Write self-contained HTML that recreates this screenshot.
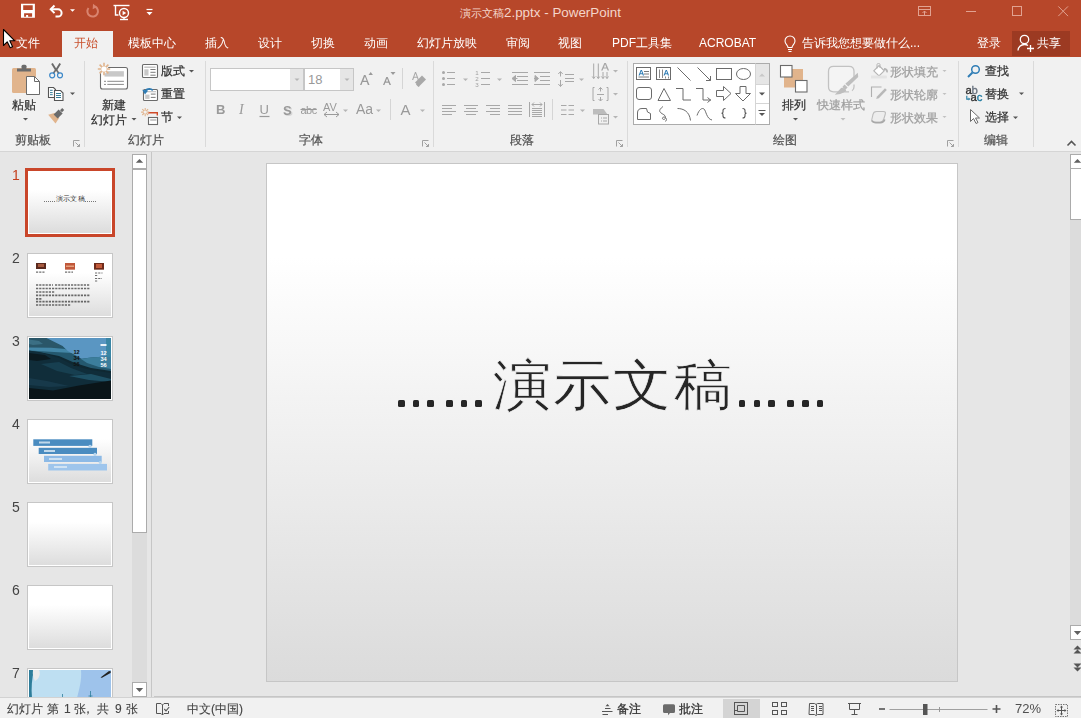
<!DOCTYPE html>
<html><head><meta charset="utf-8">
<style>
*{margin:0;padding:0;box-sizing:border-box}
html,body{width:1081px;height:718px;overflow:hidden;background:#E6E6E6;font-family:"Liberation Sans",sans-serif;position:relative}
.a{position:absolute;white-space:nowrap}
#title{left:0;top:0;width:1081px;height:57px;background:#B7472A}
#ribbon{left:0;top:57px;width:1081px;height:95px;background:#F1F1F1;border-bottom:1px solid #D5D5D5}
#status{left:0;top:697px;width:1081px;height:21px;background:#F1F1F1;border-top:1px solid #D2D2D2}
.tab{color:#fff;font-size:12px;top:36px;line-height:14px}
.gl{color:#555;font-size:12px;line-height:14px;top:133px}
.rb{color:#333;font-size:12px;line-height:14px}
.dis{color:#A0A0A0}
.num{font-size:14px;line-height:18px;color:#444}
.th{background:linear-gradient(#fff 30%,#DCDCDC);border:1px solid #C6C6C6;box-shadow:inset 0 0 0 1px #fff;left:27px;width:86px;height:65px}
.st{font-size:12px;line-height:14px;color:#444;top:702px}
svg.a{overflow:visible}
.rb,.gl{-webkit-text-stroke:0.25px currentColor}
.st{-webkit-text-stroke:0.12px currentColor}
.rb,.gl,.st,.tab,.num{will-change:transform}
</style></head><body>
<div id="title" class="a"></div>
<!-- quick access -->
<svg class="a" style="left:0;top:0" width="160" height="28" viewBox="0 0 160 28">
 <path d="M21 3.8h13.9v14h-13.9z M23.2 5.2h9.5v4.9h-9.5z M24.1 13.2h8v3.5h-4v-1.7h-2v1.7h-2z" fill="#fff" fill-rule="evenodd"/>
 <path d="M54.5 5.5l-3.8 3.8 3.8 3.8" fill="none" stroke="#fff" stroke-width="2"/>
 <path d="M51.5 9.3h6.5a3.6 3.6 0 0 1 0 7.2h-2.5" fill="none" stroke="#fff" stroke-width="2"/>
 <path d="M70 9.2h5l-2.5 2.6z" fill="#fff"/>
 <path d="M95 6.5a5.3 5.3 0 1 1 -6.5 1.5" fill="none" stroke="#D9846F" stroke-width="2"/>
 <path d="M93 3.8l4 3.2 -4.3 2.2z" fill="#D9846F"/>
 <g fill="none" stroke="#fff" stroke-width="1.4">
  <path d="M113.5 5.5h16"/>
  <path d="M115.5 6v9h3"/>
  <circle cx="124" cy="13" r="4.5"/>
  <path d="M120 19.5h8"/>
  <path d="M124 17.5v2"/>
 </g>
 <path d="M122.6 10.8v4.4l3.6-2.2z" fill="#fff"/>
 <path d="M146.5 9.5h6" stroke="#fff" stroke-width="1.2"/>
 <path d="M146.5 12h6l-3 3.2z" fill="#fff"/>
</svg>
<div class="a" style="left:460px;top:5px;font-size:11px;line-height:16px;color:#F4D6CB">演示文稿<span style="font-size:13.4px">2.pptx - PowerPoint</span></div>
<!-- window controls -->
<svg class="a" style="left:0;top:0" width="1081" height="28">
 <g fill="none" stroke="#E1A291" stroke-width="1">
  <rect x="918.5" y="6.5" width="12" height="9"/>
  <path d="M918.5 9.5h12"/><path d="M924.5 15.5v-4.5M922.5 13l2-2 2 2"/>
  <path d="M966 11.5h10"/>
  <rect x="1012.5" y="6.5" width="9" height="9"/>
  <path d="M1058.3 6.4l9.7 9.7M1068 6.4l-9.7 9.7"/>
 </g>
</svg>
<!-- tabs -->
<div class="a" style="left:62px;top:31px;width:51px;height:26px;background:#F1F1F1"></div>
<div class="a tab" style="left:16px">文件</div>
<div class="a tab" style="left:74px;color:#C9502C">开始</div>
<div class="a tab" style="left:128px">模板中心</div>
<div class="a tab" style="left:205px">插入</div>
<div class="a tab" style="left:258px">设计</div>
<div class="a tab" style="left:311px">切换</div>
<div class="a tab" style="left:364px">动画</div>
<div class="a tab" style="left:417px">幻灯片放映</div>
<div class="a tab" style="left:506px">审阅</div>
<div class="a tab" style="left:558px">视图</div>
<div class="a tab" style="left:612px">PDF工具集</div>
<div class="a tab" style="left:699px">ACROBAT</div>
<svg class="a" style="left:783px;top:35px" width="16" height="18">
 <path d="M5 12.5c0-2-3-3.5-3-6.5a5 5 0 0 1 10 0c0 3-3 4.5-3 6.5z" fill="none" stroke="#fff" stroke-width="1.1"/>
 <path d="M5 14.5h4M5.5 16.5h3" stroke="#fff" stroke-width="1.1"/>
</svg>
<div class="a tab" style="left:802px">告诉我您想要做什么...</div>
<div class="a tab" style="left:977px">登录</div>
<div class="a" style="left:1012px;top:31px;width:58px;height:25px;background:#9C3A22"></div>
<svg class="a" style="left:1016px;top:33px" width="20" height="20">
 <circle cx="8.5" cy="6.5" r="4.2" fill="none" stroke="#fff" stroke-width="1.3"/>
 <path d="M2 17.5c0-3.5 2.8-6 6.5-6 1.5 0 2.6.4 3.5 1" fill="none" stroke="#fff" stroke-width="1.3"/>
 <path d="M14.5 12v7M11 15.5h7" stroke="#fff" stroke-width="1.3"/>
</svg>
<div class="a tab" style="left:1037px">共享</div>
<!-- cursor -->
<svg class="a" style="left:0;top:0" width="20" height="50">
 <path d="M3.5 29.5V45.5L7.2 41.8L10.2 47.8L12.6 46.8L9.8 40.8H14.8Z" fill="#fff" stroke="#000" stroke-width="1.1" stroke-linejoin="round"/>
</svg>

<!-- RIBBON -->
<div id="ribbon" class="a"></div>
<!--RIBBON_CONTENT--><!-- separators -->
<div class="a" style="left:84px;top:61px;width:1px;height:86px;background:#DADADA"></div>
<div class="a" style="left:205px;top:61px;width:1px;height:86px;background:#DADADA"></div>
<div class="a" style="left:433px;top:61px;width:1px;height:86px;background:#DADADA"></div>
<div class="a" style="left:627px;top:61px;width:1px;height:86px;background:#DADADA"></div>
<div class="a" style="left:958px;top:61px;width:1px;height:86px;background:#DADADA"></div>
<div class="a" style="left:1033px;top:61px;width:1px;height:86px;background:#DADADA"></div>
<!-- group labels -->
<div class="a gl" style="left:15px">剪贴板</div>
<div class="a gl" style="left:128px">幻灯片</div>
<div class="a gl" style="left:299px">字体</div>
<div class="a gl" style="left:510px">段落</div>
<div class="a gl" style="left:773px">绘图</div>
<div class="a gl" style="left:984px">编辑</div>
<!-- clipboard -->
<div class="a rb" style="left:12px;top:98px">粘贴</div>
<div class="a rb" style="left:102px;top:98px">新建</div>
<div class="a rb" style="left:91px;top:113px">幻灯片</div>
<div class="a rb" style="left:161px;top:64px">版式</div>
<div class="a rb" style="left:161px;top:87px">重置</div>
<div class="a rb" style="left:161px;top:110px">节</div>
<!-- font -->
<div class="a" style="left:210px;top:68px;width:94px;height:23px;background:#fff;border:1px solid #C6C6C6"></div>
<div class="a" style="left:290px;top:69px;width:13px;height:21px;background:#E6E6E6"></div>
<div class="a" style="left:304px;top:68px;width:50px;height:23px;background:#fff;border:1px solid #C6C6C6"></div>
<div class="a" style="left:340px;top:69px;width:13px;height:21px;background:#E6E6E6"></div>
<div class="a" style="left:308px;top:72px;font-size:13px;line-height:16px;color:#999">18</div>
<!-- drawing text -->
<div class="a rb" style="left:782px;top:98px">排列</div>
<div class="a rb dis" style="left:817px;top:98px">快速样式</div>
<div class="a rb dis" style="left:890px;top:65px">形状填充</div>
<div class="a rb dis" style="left:890px;top:88px">形状轮廓</div>
<div class="a rb dis" style="left:890px;top:111px">形状效果</div>
<!-- editing -->
<div class="a rb" style="left:985px;top:64px">查找</div>
<div class="a rb" style="left:985px;top:87px">替换</div>
<div class="a rb" style="left:985px;top:110px">选择</div>
<!-- gallery -->
<div class="a" style="left:633px;top:63px;width:137px;height:62px;background:#fff;border:1px solid #ABABAB"></div>
<div class="a" style="left:755px;top:63px;width:15px;height:62px;border:1px solid #ABABAB;border-left:1px solid #D5D5D5"></div>
<div class="a" style="left:756px;top:64px;width:13px;height:20px;background:#E6E6E6"></div>
<div class="a" style="left:756px;top:84px;width:13px;height:1px;background:#D5D5D5"></div>
<div class="a" style="left:756px;top:103px;width:13px;height:1px;background:#D5D5D5"></div>

<svg class="a" style="left:0;top:0" width="1081" height="160">
 <!-- paste -->
 <rect x="12" y="68" width="24" height="25" rx="1.5" fill="#E1B48C"/>
 <path d="M17 68.5h14v3h-14z" fill="#6B6B6B"/>
 <rect x="21.5" y="64.8" width="5" height="4.5" rx="1.5" fill="#6B6B6B"/>
 <path d="M26.5 76.5h8l5 5v13h-13z" fill="#fff" stroke="#6B6B6B" stroke-width="1"/>
 <path d="M34.5 76.5v5h5" fill="none" stroke="#6B6B6B" stroke-width="1"/>
 <path d="M23 118h5l-2.5 2.5z" fill="#555"/>
 <!-- cut -->
 <path d="M52 63.5L56.3 70.5M60.2 63.5L55.9 70.5" stroke="#6B6B6B" stroke-width="1.9"/>
 <path d="M56.1 69.5L53.2 73.5M56.1 69.5L59 73.5" stroke="#6B6B6B" stroke-width="1.6"/>
 <circle cx="52.2" cy="75.3" r="2.5" fill="none" stroke="#3C88C8" stroke-width="1.2"/>
 <circle cx="60" cy="75.3" r="2.5" fill="none" stroke="#3C88C8" stroke-width="1.2"/>
 <!-- copy -->
 <path d="M48.5 87.5h5l2 2v8h-7z" fill="#fff" stroke="#555" stroke-width="1.1"/>
 <path d="M50 90.3h2.7M50 92.6h2.7M50 94.7h2.7" stroke="#1F6E8C" stroke-width="0.9"/>
 <path d="M54.5 90.5h6l2.5 2.5v7.5h-8.5z" fill="#fff" stroke="#555" stroke-width="1.1"/>
 <path d="M56 93.5h5M56 95.5h5M56 97.5h5" stroke="#1F6E8C" stroke-width="0.9"/>
 <path d="M70 92.5h5l-2.5 2.5z" fill="#555"/>
 <!-- format painter -->
 <path d="M48.2 114.8L54.5 113L59.3 117.8L55.5 123.4Z" fill="#E1B48C"/>
 <path d="M53.6 114.6L58.6 109.6L62.6 113.6L57.6 118.6Z" fill="#6B6B6B"/>
 <path d="M60 110.2L62.2 108L64.2 110L62 112.2Z" fill="#6B6B6B"/>
 <!-- new slide -->
 <rect x="100.5" y="67.5" width="27" height="21.5" rx="2" fill="#fff" stroke="#6B6B6B" stroke-width="1.1"/>
 <rect x="104.5" y="71.2" width="19.4" height="5.4" fill="#C8C8C8"/>
 <path d="M104 81.3h2M107.3 81.3h16.6M104 84.4h2M107.3 84.4h16.6" stroke="#8A8A8A" stroke-width="1"/>
 <circle cx="104" cy="69" r="4.5" fill="#F1F1F1"/>
 <g stroke="#E1B48C" stroke-width="1.6">
  <path d="M104 62.8v12.4M97.8 69h12.4M99.6 64.6l8.8 8.8M108.4 64.6l-8.8 8.8"/>
 </g>
 <circle cx="104" cy="69" r="2.6" fill="#fff"/>
 <path d="M131.5 118h5l-2.5 2.5z" fill="#555"/>
 <!-- layout -->
 <rect x="142.5" y="64.5" width="15" height="13" rx="1" fill="#fff" stroke="#6B6B6B" stroke-width="1.1"/>
 <path d="M144.3 67.2h11.3" stroke="#BDBDBD" stroke-width="1.3"/>
 <rect x="144.3" y="69.3" width="4.2" height="6.3" fill="#C8C8C8"/>
 <path d="M150.4 69.5h5.2M150.4 72.3h5.2M150.4 75.2h5.2" stroke="#6B6B6B" stroke-width="0.9"/>
 <path d="M189 70h5l-2.5 2.5z" fill="#555"/>
 <!-- reset -->
 <rect x="143.5" y="89.5" width="14" height="11" rx="1" fill="#fff" stroke="#6B6B6B" stroke-width="1.1"/>
 <path d="M147 91.7h9" stroke="#BDBDBD" stroke-width="1.1"/>
 <rect x="145.2" y="94.6" width="4.3" height="4.3" fill="#C8C8C8"/>
 <path d="M150.8 94.1h4.8M150.8 97.4h4.8" stroke="#6B6B6B" stroke-width="0.9"/>
 <path d="M144.8 92.5a4.6 4 0 0 1 8 -2.2" fill="none" stroke="#2F7DB5" stroke-width="1.8"/>
 <path d="M142.2 89.8l2.8 4.6 3-3.6z" fill="#2F7DB5"/>
 <!-- section -->
 <path d="M148 112.8h9.3v2.6" fill="none" stroke="#D04A28" stroke-width="1.4"/>
 <rect x="148.5" y="117.5" width="9" height="7" fill="#fff" stroke="#6B6B6B" stroke-width="1.1"/>
 <path d="M150.2 120h6.2" stroke="#BDBDBD" stroke-width="1.6"/>
 <g stroke="#E1B48C" stroke-width="1.1"><path d="M145.2 108v8.2M141.1 112.1h8.2M142.3 109.2l5.8 5.8M148.1 109.2l-5.8 5.8"/></g>
 <circle cx="145.2" cy="112.1" r="1.6" fill="#F1F1F1"/>
 <path d="M177 116.5h5l-2.5 2.5z" fill="#555"/>
 <!-- font dropdown arrows -->
 <path d="M294.5 78.5h5l-2.5 2.5z" fill="#B5B5B5"/>
 <path d="M344.5 78.5h5l-2.5 2.5z" fill="#B5B5B5"/>
 <!-- grow/shrink -->
 <g fill="#9A9A9A">
 <path d="M360 85l4-10h1.5l4 10h-1.6l-1.1-2.9h-4.2l-1.1 2.9zM363.3 80.8h3.3l-1.65-4.4z"/>
 <path d="M368.5 75l2.2-3 2.2 3z"/>
 <path d="M383 85l3.3-8h1.4l3.3 8h-1.5l-.9-2.3h-3.3l-.9 2.3zM385.9 81.5h2.3l-1.15-3.1z"/>
 <path d="M390.5 72h5l-2.5 3z"/>
 </g>
 <path d="M402.5 68v21" stroke="#D5D5D5"/>
 <!-- clear formatting -->
 <g fill="#A8A8A8">
 <path d="M412 80l3-8h1l3 8h-1.2l-.8-2.2h-3l-.8 2.2zM414.3 76.8h2.4l-1.2-3.2z"/>
 <path d="M415 82.5l7-7 4 4-7 7z"/>
 </g>
 <path d="M416.5 84l2.5 2.5" stroke="#A8A8A8" stroke-width="1.6"/>
 <!-- row2 font -->
 <g fill="#9A9A9A" font-family="Liberation Sans" font-size="13">
  <text x="216" y="114" font-weight="bold">B</text>
  <text x="239" y="114" font-style="italic" font-family="Liberation Serif" font-size="14">I</text>
  <text x="259.5" y="114">U</text>
  <text x="284.2" y="116" font-weight="bold" fill="#D6D6D6">S</text>
  <text x="283" y="114.5" font-weight="bold">S</text>
  <text x="300.5" y="114" font-size="11" letter-spacing="-0.5">abc</text>
  <text x="323" y="111" font-size="11">AV</text>
  <text x="356" y="114" font-size="14">Aa</text>
  <text x="400.5" y="114.5" font-size="15">A</text>
 </g>
 <path d="M259.5 116.5h10" stroke="#9A9A9A" stroke-width="1.2"/>
 <path d="M300.5 109.5h16" stroke="#9A9A9A" stroke-width="1"/>
 <path d="M324 114.5h15M327 112l-3 2.5 3 2.5M336 112l3 2.5-3 2.5" fill="none" stroke="#9A9A9A" stroke-width="1"/>
 <g fill="#B5B5B5">
 <path d="M343 109.5h5l-2.5 2.5z"/><path d="M376 109.5h5l-2.5 2.5z"/><path d="M420 109.5h5l-2.5 2.5z"/>
 <path d="M463 78.5h5l-2.5 2.5z"/><path d="M497 78.5h5l-2.5 2.5z"/>
 <path d="M579 78.5h5l-2.5 2.5z"/><path d="M613 70h5l-2.5 2.5z"/><path d="M613 93h5l-2.5 2.5z"/><path d="M613 116h5l-2.5 2.5z"/>
 <path d="M580 109.5h5l-2.5 2.5z"/>
 </g>
 <path d="M390.5 99v21" stroke="#D5D5D5"/>
 <!-- paragraph row1 -->
 <g fill="#A8A8A8">
  <circle cx="443.5" cy="72.5" r="1.5"/><circle cx="443.5" cy="78.5" r="1.5"/><circle cx="443.5" cy="84.5" r="1.5"/>
 </g>
 <g stroke="#A8A8A8" stroke-width="1" fill="none">
  <path d="M447 72.5h8M447 78.5h8M447 84.5h8"/>
  <path d="M481 72.5h9M481 78.5h9M481 84.5h9"/>
  <path d="M512 72.5h16M517 76.5h11M517 80.5h11M512 84.5h16"/>
  <path d="M534 72.5h16M540 76.5h10M540 80.5h10M534 84.5h16"/>
  <path d="M565 74.5h9M565 78.5h9M565 81.5h9"/>
  <path d="M560.5 72v4.5M558.3 74l2.2-2.5 2.2 2.5M560.5 80v6.5M558.3 84l2.2 2.5 2.2-2.5"/>
 </g>
 <g fill="#A0A0A0" font-family="Liberation Sans" font-size="6.2"><text x="475.3" y="74.8">1</text><text x="475.3" y="80.8">2</text><text x="475.3" y="86.8">3</text></g>
 <path d="M512 78.5l3.5-3v6z M514.5 78.5h3" fill="#A8A8A8" stroke="#A8A8A8" stroke-width="1"/>
 <path d="M538.5 78.5l-3.5-3v6z M534 78.5h3" fill="#A8A8A8" stroke="#A8A8A8" stroke-width="1"/>
 <!-- paragraph row2 -->
 <g stroke="#A8A8A8" stroke-width="1" fill="none">
  <path d="M442 105.5h14M442 108.5h10M442 111.5h14M442 114.5h10"/>
  <path d="M464 105.5h14M466 108.5h10M464 111.5h14M466 114.5h10"/>
  <path d="M486 105.5h14M490 108.5h10M486 111.5h14M490 114.5h10"/>
  <path d="M508 105.5h14M508 108.5h14M508 111.5h14M508 114.5h14"/>
  <path d="M529.5 102v15M544.5 102v15M532 108.5h10M532 110.5h10M532 112.5h10M532 114.5h10M532 116.5h10M532 104.5h10M534 102.5l-2 2 2 2M540 102.5l2 2-2 2"/>
  <path d="M561 105.5h5.5M561 110h5.5M561 114.5h5.5M568.5 105.5h5.5M568.5 110h5.5M568.5 114.5h5.5"/>
 </g>
 <path d="M552.5 99v21" stroke="#D5D5D5"/>
 <!-- text direction -->
 <path d="M593 109h10.5l4 5.5h-14.5z" fill="#BDBDBD"/>
 <g stroke="#A8A8A8" stroke-width="1" fill="none">
  <path d="M593.7 63.5v15M598.3 63.5v15M603 72v6.5M607 72v6.5M592.2 76.5l1.5 2 1.5-2M596.8 76.5l1.5 2 1.5-2M601.5 76.5l1.5 2 1.5-2M605.5 76.5l1.5 2 1.5-2"/>
  <path d="M594.5 87.5h-1.5v13h1.5M606.5 87.5h1.5v13h-1.5M597 94.5h7M600.5 87.5v4M598.5 89.5l2-2 2 2M600.5 97v4M598.5 99l2 2 2-2"/>
  <rect x="598.5" y="114.5" width="10" height="9.5" fill="#F1F1F1"/>
  <path d="M601 118h1M603 118h4M601 121h1M603 121h4"/>
 </g>
 <path d="M604.3 63l-3.2 7.5h1.5l.7-1.9h3.6l.7 1.9h1.5l-3.2-7.5zM603.9 67.4l1.2-3.2 1.2 3.2z" fill="#A8A8A8"/>
 <!-- launchers -->
 <g fill="none" stroke="#A0A0A0" stroke-width="1">
  <path d="M73.5 146.5v-6h6M75.5 142.5l4 4M79.5 144v2.5h-2.5"/>
  <path d="M422.5 146.5v-6h6M424.5 142.5l4 4M428.5 144v2.5h-2.5"/>
  <path d="M616.5 146.5v-6h6M618.5 142.5l4 4M622.5 144v2.5h-2.5"/>
  <path d="M947.5 146.5v-6h6M949.5 142.5l4 4M953.5 144v2.5h-2.5"/>
 </g>
 <!-- gallery shapes -->
 <g fill="none" stroke="#6B6B6B" stroke-width="1">
  <rect x="636.5" y="67.5" width="14" height="12"/>
  <path d="M644 71.5h5M644 74h5M638.5 77h10.5" stroke-width="0.9"/>
  <rect x="656.5" y="67.5" width="14" height="12"/>
  <path d="M659.5 69.5v8.5M662.5 69.5v8.5M665.5 76.5v2M668.5 76.5v2" stroke-width="0.8"/>
  <path d="M677.5 67.5l13 13"/>
  <path d="M697.5 67.5l13 13M706 80.5h4.5v-4.5"/>
  <rect x="716.5" y="68.5" width="15" height="11"/>
  <ellipse cx="743.5" cy="74" rx="7" ry="5.5"/>
  <rect x="636.5" y="87.5" width="15" height="12" rx="2.5"/>
  <path d="M658 100.5l6-12 6.5 12z"/>
  <path d="M676 88.5h7v11.5h8"/>
  <path d="M696 88.5h7v11.5h8M707.5 97.5l3 2.5-3 2.5"/>
  <path d="M716.5 90.5h7v-4l7.5 7-7.5 7v-4h-7z"/>
  <path d="M740 86.5h6v7h4.5l-7.5 7.5-7.5-7.5h4.5z"/>
  <path d="M637.5 113Q637.5 108.5 642 108.5H646.5Q646.5 113 650.5 113.5V119.5H637.5Z"/>
  <path d="M663 106.5C660.5 108.5 658.5 110.5 660.5 112.5S665.5 114.5 665.5 117.5C665.5 120 662 120 662.5 118S666.5 117.5 666.5 119.5 665 121 665 121"/>
  <path d="M677.5 108.5c6 0 12 3 13 12"/>
  <path d="M697 115.5c2-6 5-8 7-6.5s2.5 10 8 11"/>
 </g>
 <path d="M725.5 108.5Q723 108.5 723 110.5V112Q723 113.3 721.5 113.3Q723 113.3 723 114.6V116Q723 118 725.5 118M742.5 108.5Q745 108.5 745 110.5V112Q745 113.3 746.5 113.3Q745 113.3 745 114.6V116Q745 118 742.5 118" fill="none" stroke="#555" stroke-width="1.1"/>
 <path d="M638.5 75.5l2.2-5.5h1.2l2.2 5.5h-1.2l-.5-1.3h-2.2l-.5 1.3zM640.5 73.3h1.6l-.8-2.2z" fill="#2F7DB5"/><path d="M663.5 75.5l2.2-5.5h1.2l2.2 5.5h-1.2l-.5-1.3h-2.2l-.5 1.3zM665.5 73.3h1.6l-.8-2.2z" fill="#2F7DB5"/>
 <path d="M759 76.5h6l-3-3z" fill="#C8C8C8"/>
 <path d="M759 92.5h6l-3 3z" fill="#555"/>
 <path d="M758.5 110.5h7" stroke="#555" stroke-width="1"/>
 <path d="M759 113h6l-3 3z" fill="#555"/>
 <!-- arrange -->
 <rect x="784" y="69" width="19" height="18.5" fill="#E1B48C"/>
 <rect x="780.5" y="65.5" width="11.5" height="11.5" fill="#fff" stroke="#6B6B6B" stroke-width="1.1"/>
 <rect x="795.5" y="80.5" width="11.5" height="11.5" fill="#fff" stroke="#6B6B6B" stroke-width="1.1"/>
 <path d="M793 118h5l-2.5 2.5z" fill="#555"/>
 <!-- quick styles -->
 <path d="M849 91.8H833.5Q828.5 91.8 828.5 86.8V71.3Q828.5 66.3 833.5 66.3H849Q854 66.3 854 71.3V77.5M854 84.5V86.8Q854 89.5 852 90.8" fill="#F4F4F4" stroke="#C2C2C2" stroke-width="1.3"/>
 <path d="M857.8 72.8L858.2 77L848.3 86.6L845.3 83.8Z" fill="#BEBEBE"/>
 <path d="M844.6 84.6L847.6 87.4L845.3 89.8L842.3 87Z" fill="#BEBEBE"/>
 <path d="M841.3 87.8Q845.8 88 846.3 91.3Q841 94.6 834.8 94.8Z" fill="#BEBEBE"/>
 <path d="M840.5 118h5l-2.5 2.5z" fill="#C0C0C0"/>
 <!-- shape fill/outline/effect -->
 <path d="M873.8 70.8L879 65.6L884.2 70.8L879 76Z" fill="#fff" stroke="#B5B5B5" stroke-width="1.2"/>
 <path d="M877 68.5V64.5Q877 63.5 878.5 63.5Q880 63.5 880 64.5V68" fill="none" stroke="#B5B5B5" stroke-width="1"/>
 <path d="M884 69Q887.5 69 887 72.3" fill="none" stroke="#B5B5B5" stroke-width="1.8"/>
 <path d="M871 77h15.8" stroke="#E4E4E4" stroke-width="2.8"/>
 <path d="M871.5 97v-10h10" fill="none" stroke="#B0B0B0" stroke-width="1.1"/>
 <path d="M877 96.5l8-8.2 1.8 1.8-8 8.2-2.6.8z" fill="#B8B8B8"/>
 <path d="M873 114.5Q873.5 111.5 876.5 111.5H883.5Q886 111.5 885.3 114L883.8 119Q883 122 880 122H874Q871.3 122 871.8 119.5Z" fill="#EDEDED" stroke="#BDBDBD" stroke-width="1.1"/>
 <path d="M872 120.5Q873 122.8 876 122.8H880.5Q883.5 122.8 884.8 119.5" fill="none" stroke="#A8A8A8" stroke-width="1.6"/>
 <g fill="#C0C0C0"><path d="M942.5 70h4l-2 2z"/><path d="M942.5 93h4l-2 2z"/><path d="M942.5 116h4l-2 2z"/></g>
 <!-- find -->
 <circle cx="975.5" cy="69.5" r="3.8" fill="none" stroke="#2F7DB5" stroke-width="1.5"/>
 <path d="M972.5 72.5l-4.5 4.5" stroke="#2F7DB5" stroke-width="2"/>
 <!-- replace -->
 <g font-family="Liberation Sans" font-size="11.3" stroke-width="0.35">
  <text x="965.6" y="93.9" fill="#333" stroke="#333">a</text><text x="971.5" y="93.9" fill="#6B7480" stroke="#6B7480">b</text>
  <text x="970.6" y="101" fill="#333" stroke="#333">a</text><text x="976.8" y="101" fill="#1F7AA0" stroke="#1F7AA0">c</text>
 </g>
 <path d="M966.8 95.8v3.3h2" fill="none" stroke="#1F7AA0" stroke-width="1.1"/>
 <path d="M968.5 97.6l1.8 1.5-1.8 1.5z" fill="#1F7AA0"/>
 <path d="M1019 92.5h5l-2.5 2.5z" fill="#555"/>
 <!-- select -->
 <path d="M970.5 109.5v12l3-3 2.5 5 2-1-2.5-4.5h4z" fill="#fff" stroke="#6B6B6B" stroke-width="1"/>
 <path d="M1013 116.5h5l-2.5 2.5z" fill="#555"/>
 <!-- collapse -->
 <path d="M1067.5 145.5l4-4 4 4" fill="none" stroke="#555" stroke-width="1.6"/>
</svg>
<!--/RIBBON-->

<!-- thumbnails pane -->
<div class="a" style="left:151px;top:152px;width:1px;height:545px;background:#C6C6C6"></div>
<div class="a num" style="left:12px;top:166px;color:#C43E1C">1</div>
<div class="a" style="left:25px;top:168px;width:90px;height:69px;border:3px solid #C9462A;background:#fff"></div>
<div class="a" style="left:29px;top:172px;width:82px;height:61px;background:linear-gradient(#fff 30%,#DCDCDC)"></div>
<div class="a" style="left:56px;top:193.5px;font-size:7px;line-height:10px;color:#3A3A3A;letter-spacing:0.2px">演示文稿</div>
<div class="a" style="left:44px;top:201px;width:11px;height:1px;border-top:1px dotted #777"></div>
<div class="a" style="left:85px;top:201px;width:11px;height:1px;border-top:1px dotted #777"></div>
<div class="a num" style="left:12px;top:249px">2</div>
<div class="a th" style="top:253px"></div>
<svg class="a" style="left:0;top:0" width="1" height="1">
 <rect x="36" y="263" width="10" height="6" fill="#5A2A1E"/><rect x="38" y="264" width="6" height="3" fill="#A65A3F"/>
 <rect x="65" y="263" width="10" height="6.5" fill="#C0583A"/><rect x="66" y="265.5" width="8" height="1.5" fill="#E6A07D"/>
 <rect x="94" y="263" width="10" height="6.5" fill="#6E2A1A"/><rect x="96" y="264" width="6" height="4" fill="#C25A3A"/>
 <g stroke="#2A2A2A" stroke-width="1.7" opacity=".68" stroke-dasharray="2.2 1">
  <path d="M36 272.2h8.5M65 272.2h8M95 273h7.5" stroke-width="1.2"/>
  <path d="M95 275.5h3M95 278.5h7M95 281h2.5" stroke-width="1"/>
  <path d="M36 285h17M55 285h35"/>
  <path d="M36 288.5h54"/>
  <path d="M36 292h19"/>
  <path d="M36 295.3h54"/>
  <path d="M36 298.8h6"/>
  <path d="M36 301.7h54"/>
  <path d="M36 305h35"/>
 </g>
</svg>
<div class="a num" style="left:12px;top:332px">3</div>
<div class="a th" style="top:336px"></div>
<svg class="a" style="left:29px;top:338px" width="82" height="61" viewBox="0 0 82 61">
 <rect width="82" height="61" fill="#0F2832"/>
 <path d="M0 0H82V33L62 30L46 25L30 18L10 14L0 13Z" fill="#24586E"/>
 <path d="M0 0H17.5L28 5L35 9L22 10.5L0 10Z" fill="#2A5668"/>
 <path d="M0 1.5L10 3L14 6L4 7L0 6Z" fill="#3B6F84"/>
 <path d="M0 9.5L22 9.8L36 11L44 15L25 14L0 12.5Z" fill="#4386A6"/>
 <path d="M17.5 0H77V18.5L62 19.5L52.6 20.8L38.4 12.8L33.6 8Z" fill="#5A96C2"/>
 <path d="M77 0H82V27H77Z" fill="#3A86A5"/>
 <path d="M52 21L62 19.5L77 18.5L82 19V31L70 29L58 25Z" fill="#3C7E9C"/>
 <path d="M0 12.5L14 15L30 20L46 28L62 32L82 35V61H0Z" fill="#102D3A"/>
 <path d="M0 15L16 17L22 21L8 23L0 22Z" fill="#0B1A20"/>
 <path d="M12 26L30 24L42 30L58 36L46 37L28 33Z" fill="#173F50"/>
 <path d="M40 38L62 36L82 41V44L60 42Z" fill="#1E5064"/>
 <path d="M0 40L18 43L40 48L20 49L0 47Z" fill="#17394A"/>
 <path d="M0 61V50L24 52.5L50 47.5L82 42.5V61Z" fill="#0A1519"/>
 <g font-family="Liberation Sans" font-weight="bold" font-size="5.6">
  <text x="44.5" y="15.5" fill="#111">12</text><text x="44.5" y="21.5" fill="#111">34</text><text x="44.5" y="27.8" fill="#111">56</text>
  <rect x="71.5" y="6" width="6" height="2" fill="#EAF2F8"/>
  <text x="71.5" y="16.8" fill="#fff">12</text><text x="71.5" y="23" fill="#fff">34</text><text x="71.5" y="29.3" fill="#fff">56</text>
 </g>
</svg>
<div class="a num" style="left:12px;top:415px">4</div>
<div class="a th" style="top:419px"></div>
<svg class="a" style="left:0;top:0" width="1" height="1">
 <rect x="33.3" y="439.3" width="59" height="6.6" fill="#4A8CC0"/>
 <rect x="38.7" y="447.8" width="58.3" height="6.2" fill="#4A8CC0"/>
 <rect x="44" y="455.8" width="57.7" height="6.2" fill="#8DBAE6"/>
 <rect x="48.2" y="463.9" width="58.8" height="6.6" fill="#9EC5EC"/>
 <g fill="#B8D6EE"><circle cx="90" cy="446.4" r="1.6"/><circle cx="95" cy="454.4" r="1.6"/><circle cx="100.3" cy="462.5" r="1.6"/></g>
 <g fill="#DDEBF6" opacity=".8">
  <rect x="39" y="441.5" width="11" height="2"/><rect x="44" y="450" width="11" height="2"/>
  <rect x="49" y="458" width="13" height="2"/><rect x="54" y="466" width="13" height="2"/>
 </g>
</svg>
<div class="a num" style="left:12px;top:498px">5</div>
<div class="a th" style="top:502px"></div>
<div class="a num" style="left:12px;top:581px">6</div>
<div class="a th" style="top:585px"></div>
<div class="a num" style="left:12px;top:664px">7</div>
<div class="a th" style="top:668px"></div>
<svg class="a" style="left:29px;top:670px" width="82" height="28" viewBox="0 0 82 28">
 <rect width="82" height="28" fill="#BEDFF2"/>
 <path d="M52 0H82V28H48C50 20 53 10 52 0Z" fill="#9EC3EB"/>
 <path d="M0 0H5C3 8 2 18 3 28H0Z" fill="#2E7D9A"/>
 <path d="M4 0H10C12 4 10 9 6 11C4 8 3.5 4 4 0Z" fill="#EAEAEA"/>
 <path d="M71.5 7.5L80 1L82 1.5L81.5 3L73 7.8Z" fill="#222"/>
 <path d="M61.5 21V28M59.5 26H63.5M33.5 24V28" stroke="#2E7D9A" stroke-width=".8"/>
</svg>
<!-- left scrollbar -->
<div class="a" style="left:132px;top:154px;width:15px;height:543px;background:#DCDCDC"></div>
<div class="a" style="left:132px;top:154px;width:15px;height:15px;background:#fff;border:1px solid #ABABAB"></div>
<div class="a" style="left:132px;top:168px;width:15px;height:365px;background:#fff;border:1px solid #ABABAB;border-top-width:2px"></div>
<div class="a" style="left:132px;top:682px;width:15px;height:15px;background:#fff;border:1px solid #ABABAB"></div>
<svg class="a" style="left:0;top:0" width="1" height="1">
 <path d="M135.8 162.8h7.4l-3.7-3.9z" fill="#606060"/>
 <path d="M135.8 688h7.4l-3.7 3.9z" fill="#606060"/>
</svg>

<!-- main slide -->
<div class="a" style="left:154px;top:696px;width:927px;height:1px;background:#C6C6C6"></div>
<div class="a" style="left:266px;top:163px;width:692px;height:519px;background:linear-gradient(#fff 18%,#DBDBDB 100%);border:1px solid #C6C6C6"></div>
<!--MAIN_CONTENT--><div class="a" style="left:493px;top:345px;font-size:58px;letter-spacing:2.2px;line-height:80px;color:#262626;-webkit-text-stroke:0.7px #F3F3F3;transform:scaleY(0.943);transform-origin:0 40px">演示文稿</div><div class="a" style="left:398px;top:400px;width:6.5px;height:6.8px;border-radius:1.5px;background:#262626"></div><div class="a" style="left:412.7px;top:400px;width:6.5px;height:6.8px;border-radius:1.5px;background:#262626"></div><div class="a" style="left:427.4px;top:400px;width:6.5px;height:6.8px;border-radius:1.5px;background:#262626"></div><div class="a" style="left:446px;top:400px;width:6.5px;height:6.8px;border-radius:1.5px;background:#262626"></div><div class="a" style="left:460.7px;top:400px;width:6.5px;height:6.8px;border-radius:1.5px;background:#262626"></div><div class="a" style="left:475.4px;top:400px;width:6.5px;height:6.8px;border-radius:1.5px;background:#262626"></div><div class="a" style="left:738.8px;top:400px;width:6.5px;height:6.8px;border-radius:1.5px;background:#262626"></div><div class="a" style="left:753.5px;top:400px;width:6.5px;height:6.8px;border-radius:1.5px;background:#262626"></div><div class="a" style="left:768.2px;top:400px;width:6.5px;height:6.8px;border-radius:1.5px;background:#262626"></div><div class="a" style="left:787.3px;top:400px;width:6.5px;height:6.8px;border-radius:1.5px;background:#262626"></div><div class="a" style="left:802px;top:400px;width:6.5px;height:6.8px;border-radius:1.5px;background:#262626"></div><div class="a" style="left:816.7px;top:400px;width:6.5px;height:6.8px;border-radius:1.5px;background:#262626"></div><!--/MAIN-->
<!-- right scrollbar -->
<div class="a" style="left:1070px;top:154px;width:11px;height:486px;background:#DCDCDC"></div>
<div class="a" style="left:1070px;top:154px;width:15px;height:15px;background:#fff;border:1px solid #ABABAB"></div>
<div class="a" style="left:1070px;top:168px;width:15px;height:52px;background:#fff;border:1px solid #ABABAB"></div>
<div class="a" style="left:1070px;top:625px;width:15px;height:15px;background:#fff;border:1px solid #ABABAB"></div>
<svg class="a" style="left:0;top:0" width="1" height="1">
 <path d="M1073.8 162.8h7.4l-3.7-3.9z" fill="#606060"/>
 <path d="M1073.8 631h7.4l-3.7 3.9z" fill="#606060"/>
 <path d="M1073.5 649.5h8l-4-4zM1073.5 653.5h8l-4-4z" fill="#555"/>
 <path d="M1073.5 663.5h8l-4 4zM1073.5 667.5h8l-4 4z" fill="#555"/>
</svg>

<!-- status bar -->
<div id="status" class="a"></div>
<!--STATUS_CONTENT--><div class="a st" style="left:7px">幻灯片</div><div class="a st" style="left:47px">第</div><div class="a st" style="left:63.5px">1</div><div class="a st" style="left:73.5px">张</div><div class="a st" style="left:82px">，</div><div class="a st" style="left:97px">共</div><div class="a st" style="left:114.5px">9</div><div class="a st" style="left:125.5px">张</div>
<div class="a st" style="left:187px">中文(中国)</div>
<div class="a st" style="left:617px;color:#333;-webkit-text-stroke:0.3px #333">备注</div>
<div class="a st" style="left:679px;color:#333;-webkit-text-stroke:0.3px #333">批注</div>
<div class="a st" style="left:1015px;font-size:13px;color:#505050;-webkit-text-stroke:0">72%</div>
<div class="a" style="left:723px;top:699px;width:37px;height:19px;background:#D4D4D4"></div>
<svg class="a" style="left:0;top:0" width="1081" height="718">
 <g fill="none" stroke="#555" stroke-width="1">
  <path d="M156.5 703.5h4.5l1.5 1.5v10l-1.5-1.5h-4.5z"/>
  <path d="M162.5 705l1.5-1.5h4.5v2.5M168.5 711v2.5h-4.5l-1.5 1.5"/>
  <path d="M164.3 709l1.7 1.8 3.2-3.8" stroke-width="1.1"/>
  <path d="M605 708.5h5.5M602 711.5h10.5M602.5 714.5h5.5"/>
  <rect x="734.5" y="702.5" width="13" height="12"/>
  <path d="M737.5 705.5h7v6h-7zM734.5 710.5h3"/>
  <rect x="772.5" y="702.5" width="5" height="4"/><rect x="781.5" y="702.5" width="5" height="4"/>
  <rect x="772.5" y="710.5" width="5" height="4"/><rect x="781.5" y="710.5" width="5" height="4"/>
  <path d="M809.5 703.5h5l1.5 1 1.5-1h5.5v11h-5.5l-1.5 1-1.5-1h-5.5zM816.5 704.5v10M811 706.5h3M811 708.5h3M811 710.5h3M819 706.5h3M819 708.5h3M819 710.5h3"/>
  <path d="M848 703.5h13M849.5 703.5v6h10v-6M854.5 709.5v5M851.5 714.5h6"/>
  <path d="M889.5 709.5h98" stroke="#A0A0A0"/>
  <path d="M1055.5 704.5h12v12h-12z" stroke="#777" stroke-dasharray="1.5 1"/>
 </g>
 <path d="M664.5 704.3h9q1.5 0 1.5 1.5v5.6q0 1.5-1.5 1.5h-3.5l-2 2.3v-2.3h-3.5q-1.5 0-1.5-1.5v-5.6q0-1.5 1.5-1.5z" fill="#6B6B6B"/><path d="M605.5 706.3l2-2.2 2 2.2z" fill="#555"/>
 <path d="M879 709h6" stroke="#555" stroke-width="1.6"/>
 <path d="M992.5 709h8M996.5 705v8" stroke="#555" stroke-width="1.6"/>
 <rect x="923" y="704" width="4.5" height="11" fill="#555"/>
 <path d="M939.5 707v5" stroke="#999"/>
 <path d="M1061.5 706.5v8M1057.5 710.5h8" stroke="#555" stroke-width="1"/><g fill="#555"><path d="M1061.5 705.5l-1.6 2h3.2zM1061.5 715.5l-1.6-2h3.2zM1056.5 710.5l2-1.6v3.2zM1066.5 710.5l-2-1.6v3.2z"/></g>
</svg>
<!--/STATUS-->
</body></html>
